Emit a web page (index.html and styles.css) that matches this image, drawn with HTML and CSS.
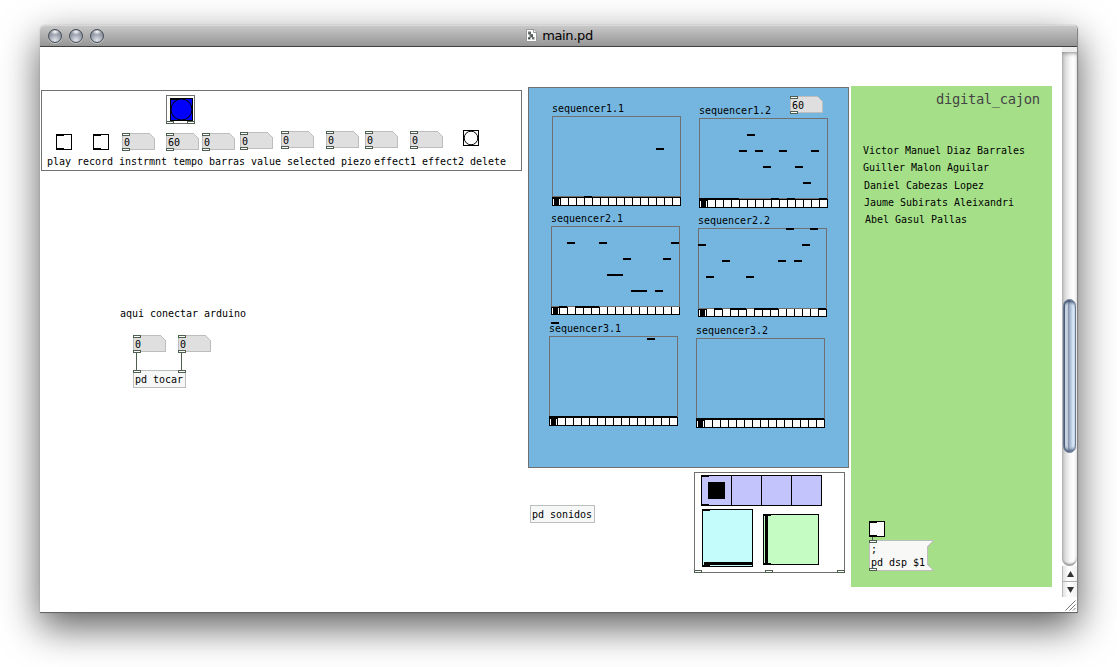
FILE: index.html
```html
<!DOCTYPE html>
<html lang="en">
<head>
<meta charset="utf-8">
<title>main.pd</title>
<link rel="stylesheet" href="styles.css">
</head>
<body>
<main class="window">
  <header class="titlebar">
    <div class="lights"><span class="light"></span><span class="light"></span><span class="light"></span></div>
    <div class="title">
      <svg class="doc" viewBox="0 0 11 13" width="11" height="13">
        <path d="M.5.5H8L10.500 3V12.500H.5Z" fill="#fff" stroke="#999"/>
        <path d="M7.500.5V3.500H10.500" fill="none" stroke="#999"/>
        <path d="M2 2.500H5V5H7V8H8.500V10.500H6V8.500H4.500V10.500H2V8H3.500V5.500H2Z" fill="#6f7773"/>
        <path d="M3.500 4H5M5 7H7M2.500 9.500H4" stroke="#36443e"/>
      </svg>
      <span>main.pd</span>
    </div>
  </header>
  <div class="body">
    <svg class="patch" viewBox="40 47 1022 565" width="1022" height="565">
      <defs>
        <g id="port"><rect class="port" x=".5" y=".5" width="7" height="2"/></g>
        <g id="number">
          <path class="number" d="M.5.5H27.500L32.500 5.500V16.500H.5Z"/>
          <use href="#port"/><use href="#port" y="15"/>
        </g>
        <g id="toggle"><rect class="control" x=".5" y=".5" width="15" height="15"/><path class="ink" d="M0 0H8V2H0ZM0 14H8V16H0Z"/></g>
        <g id="strip">
          <rect class="control" x=".5" y=".5" width="128" height="8"/>
          <path class="line" d="M8.500 0V8M16.500 0V8M24.500 0V8M32.500 0V8M40.500 0V8M48.500 0V8M56.500 0V8M64.500 0V8M72.500 0V8M80.500 0V8M88.500 0V8M96.500 0V8M104.500 0V8M112.500 0V8M120.500 0V8"/>
          <rect class="ink" x="2" y="1" width="5" height="8"/><path class="ink" d="M0 0H8V2H0Z"/>
        </g>
        <g id="frame"><rect class="frame" x=".5" y=".5" width="128" height="80"/></g>
      </defs>

      <g class="controls">
        <rect class="frame" x="41.500" y="90.500" width="480" height="80"/>
        <rect class="frame" x="166.500" y="95.500" width="28" height="28"/>
        <rect class="bang-blue" x="170.500" y="98.500" width="22" height="22"/>
        <path class="ink" d="M170 98H178V100H170Z"/>
        <circle class="ring" cx="181.500" cy="109.500" r="10.500"/>
        <use href="#port" x="166" y="121"/><use href="#port" x="187" y="121"/>
        <use href="#toggle" x="56" y="134"/><use href="#toggle" x="93" y="134"/>
        <use href="#number" x="122" y="133"/><text x="124" y="146">0</text>
        <use href="#number" x="166" y="133"/><text x="168" y="146">60</text>
        <use href="#number" x="202" y="133"/><text x="204" y="146">0</text>
        <use href="#number" x="240" y="132"/><text x="242" y="145">0</text>
        <use href="#number" x="281" y="131"/><text x="283" y="144">0</text>
        <use href="#number" x="326" y="131"/><text x="328" y="144">0</text>
        <use href="#number" x="365" y="131"/><text x="367" y="144">0</text>
        <use href="#number" x="410" y="131"/><text x="412" y="144">0</text>
        <rect class="control" x="463.500" y="130.500" width="15" height="15"/>
        <circle class="ring" cx="471" cy="138" r="6.800"/>
        <text x="47" y="165">play record instrmnt tempo barras value selected piezo</text>
        <text x="374" y="165">effect1 effect2 delete</text>
      </g>

      <g class="sequencers">
        <rect class="panel-blue" x="528.500" y="87.500" width="320" height="380"/>
        <use href="#frame" x="552" y="116"/><use href="#strip" x="552" y="197"/>
        <path class="ink" d="M656 148h8v2h-8zM584 196h8v2h-8z"/>
        <text x="552" y="112">sequencer1.1</text>

        <use href="#frame" x="699" y="118"/><use href="#strip" x="699" y="199"/>
        <path class="ink" d="M747 134h8v2h-8zM739 150h8v2h-8zM755 150h8v2h-8zM779 150h8v2h-8zM811 150h8v2h-8zM763 166h8v2h-8zM795 166h8v2h-8zM803 182h8v2h-8zM699 198h40v2h-40zM771 198h8v2h-8zM787 198h8v2h-8zM819 198h8v2h-8z"/>
        <text x="699" y="114">sequencer1.2</text>
        <use href="#number" x="790" y="96"/><text x="792" y="109">60</text>

        <use href="#strip" x="551" y="306"/><use href="#frame" x="551" y="226"/>
        <path class="ink" d="M567 242h8v2h-8zM599 242h8v2h-8zM671 242h8v2h-8zM623 258h8v2h-8zM663 258h8v2h-8zM607 274h16v2h-16zM631 290h16v2h-16zM655 290h8v2h-8zM551 322h8v2h-8zM559 306h8v2h-8zM575 306h24v2h-24z"/>
        <text x="551" y="222">sequencer2.1</text>

        <use href="#strip" x="698" y="308"/><use href="#frame" x="698" y="228"/>
        <path class="ink" d="M786 228h8v2h-8zM810 228h8v2h-8zM698 244h8v2h-8zM802 244h8v2h-8zM722 260h8v2h-8zM778 260h8v2h-8zM794 260h8v2h-8zM706 276h8v2h-8zM746 276h8v2h-8zM714 308h8v2h-8zM730 308h16v2h-16zM754 308h24v2h-24zM818 308h8v2h-8z"/>
        <text x="698" y="224">sequencer2.2</text>

        <use href="#frame" x="549" y="336"/><use href="#strip" x="549" y="417"/>
        <path class="ink" d="M647 338h8v2h-8zM549 416h128v2h-128z"/>
        <text x="549" y="332">sequencer3.1</text>

        <use href="#frame" x="696" y="338"/><use href="#strip" x="696" y="419"/>
        <path class="ink" d="M696 418h128v2h-128z"/>
        <text x="696" y="334">sequencer3.2</text>
      </g>

      <g class="arduino">
        <text x="120" y="317">aqui conectar arduino</text>
        <rect class="object" x="133.500" y="370.500" width="52" height="17"/>
        <path class="cord" d="M136.500 352V370M181.500 352V370"/>
        <use href="#number" x="133" y="335"/><text x="135" y="348">0</text>
        <use href="#number" x="178" y="335"/><text x="180" y="348">0</text>
        <use href="#port" x="133" y="370"/><use href="#port" x="178" y="370"/>
        <text x="135" y="383">pd tocar</text>
      </g>

      <g class="sounds">
        <rect class="object" x="530.500" y="505.500" width="64" height="17"/>
        <text x="532" y="518">pd sonidos</text>
        <rect class="frame" x="694.500" y="472.500" width="150" height="100"/>
        <rect class="radio" x="701.500" y="475.500" width="120" height="30"/>
        <path class="line" d="M731.500 475V505M761.500 475V505M791.500 475V505"/>
        <path class="ink" d="M708 482h17v17h-17zM701 475h8v2h-8zM701 504h8v2h-8z"/>
        <rect class="slider-v" x="702.500" y="509.500" width="50" height="57"/>
        <path class="ink" d="M704 562h48v3h-48zM702 509h8v2h-8zM702 565h8v2h-8z"/>
        <rect class="slider-h" x="763.500" y="514.500" width="55" height="50"/>
        <path class="ink" d="M765 515h3v49h-3zM763 514h8v2h-8zM763 563h8v2h-8z"/>
        <use href="#port" x="694" y="570"/><use href="#port" x="765" y="570"/><use href="#port" x="837" y="570"/>
      </g>

      <g class="credits">
        <rect class="panel-green" x="851" y="86" width="201" height="501"/>
        <text class="heading" x="936" y="104" textLength="104">digital_cajon</text>
        <text x="863" y="154">Victor Manuel Diaz Barrales</text>
        <text x="863" y="171">Guiller Malon Aguilar</text>
        <text x="864" y="189">Daniel Cabezas Lopez</text>
        <text x="864" y="206">Jaume Subirats Aleixandri</text>
        <text x="865" y="223">Abel Gasul Pallas</text>
        <use href="#toggle" x="869" y="521"/>
        <path class="cord" d="M872.500 537V541"/>
        <path class="message" d="M869.500 540.500H933.500L927.500 547V564L933.500 570.500H869.500Z"/>
        <use href="#port" x="869" y="540"/><use href="#port" x="869" y="568"/>
        <text x="871" y="553">;</text>
        <text x="871" y="566">pd dsp $1</text>
      </g>
    </svg>
    <aside class="side">
      <div class="track"><div class="thumb"></div></div>
      <div class="arrow"><svg viewBox="0 0 7 6" width="7" height="6"><path d="M3.500 0L7 6H0Z"/></svg></div>
      <div class="arrow"><svg viewBox="0 0 7 6" width="7" height="6"><path d="M0 0H7L3.500 6Z"/></svg></div>
      <svg class="grip" viewBox="0 0 15 15" width="15" height="15"><path d="M3.500 13.500L13.500 3.500M7.500 13.500L13.500 7.500M11 13.500L13.500 11"/></svg>
    </aside>
  </div>
</main>
</body>
</html>
```
FILE: styles.css
```css
* { box-sizing: border-box; }
body {
  margin: 0;
  height: 667px;
  padding: 25px 39px 54px 40px;
  overflow: hidden;
  background: #fff;
}
.window {
  display: flex;
  flex-direction: column;
  width: 1038px;
  height: 588px;
  border-right: 1px solid #848484;
  border-bottom: 1px solid #666;
  border-radius: 5px 5px 0 0;
  background: #fff;
  box-shadow: 0 0 1px rgba(0, 0, 0, .4), 0 14px 38px rgba(0, 0, 0, .64);
}
.titlebar {
  display: grid;
  grid-template-columns: 80px 1fr 78px;
  align-items: center;
  height: 22px;
  border-top: 1px solid #d9d9d9;
  border-bottom: 1px solid #404040;
  border-radius: 5px 5px 0 0;
  background: linear-gradient(#c8c8c8, #969696);
}
.lights { display: flex; gap: 7px; padding-left: 8px; }
.light {
  width: 14px;
  height: 14px;
  border: 1px solid #464c58;
  border-radius: 50%;
  background: radial-gradient(ellipse 5px 3px at 50% 15%, #fff, rgba(255, 255, 255, 0)), radial-gradient(circle at 50% 85%, #dfe4ec 0, #a4aab5 45%, #69707d 100%);
  box-shadow: 0 1px 0 rgba(255, 255, 255, .4);
}
.title {
  display: flex;
  justify-content: center;
  align-items: center;
  gap: 5px;
  color: #000;
  font: 13px/18px "DejaVu Sans", sans-serif;
  letter-spacing: -.35px;
}
.doc { position: relative; top: -1px; }
.body { display: flex; flex: 1; }
.patch {
  display: block;
  flex: none;
  fill: #000;
  font: 10px "DejaVu Sans Mono", monospace;
  letter-spacing: -.02px;
  shape-rendering: crispEdges;
}
.patch text { white-space: pre; }
.patch .heading { fill: #444; font-size: 13.8px; }
.frame { fill: none; stroke: #707070; }
.port { fill: #fff; stroke: #506050; }
.number { fill: #dfdfdf; stroke: #bdbdbd; }
.object { fill: #f6f8f8; stroke: #bdbdbd; }
.message { fill: #f8f8f6; stroke: #bdbdbd; }
.control { fill: #fcfcfc; stroke: #000; }
.bang-blue { fill: #0000fc; stroke: #000; }
.ring { fill: none; stroke: #000; shape-rendering: auto; }
.ink { fill: #000; }
.line { fill: none; stroke: #000; }
.cord { fill: none; stroke: #506050; }
.panel-blue { fill: #74b6df; stroke: #707070; }
.panel-green { fill: #a5e089; }
.radio { fill: #c4c4fc; stroke: #000; }
.slider-v { fill: #c4fcfc; stroke: #000; }
.slider-h { fill: #c4fcc4; stroke: #000; }
.side { display: flex; flex-direction: column; width: 15px; }
.track {
  height: 519px;
  padding: 252px 1px 0;
  border-top: 5px solid #eee;
  padding-top: 247px;
  border-radius: 0 0 8px 8px;
  background: linear-gradient(90deg, #b4b4b4, #dadada 20%, #f4f4f4 50%, #fff 75%, #ececec);
  box-shadow: inset 0 4px 4px -3px #888, inset 0 -3px 2px -1px #999;
}
.thumb {
  height: 154px;
  border: 1px solid #6a7990;
  border-radius: 7px;
  background: linear-gradient(90deg, #a7b5ca 0, #cbd5e4 15%, #c0cbdb 32%, #8796ae 40%, #a6b6cd 55%, #cbdcf0 75%, #dceafa 88%, #b7c6dd);
  box-shadow: inset 0 5px 3px -3px #384c69, inset 0 -5px 3px -3px #506580, inset 1px 0 0 #4b5c76;
}
.arrow {
  display: flex;
  justify-content: center;
  align-items: center;
  height: 16px;
  border-left: 1px solid #bbb;
  border-bottom: 1px solid #b0b0b0;
  background: linear-gradient(90deg, #e2e2e2, #fff 40%, #f1f1f1);
  fill: #333;
}
.arrow + .arrow { height: 15px; border-bottom: 0; }
.grip { fill: none; stroke: #777; }
```
